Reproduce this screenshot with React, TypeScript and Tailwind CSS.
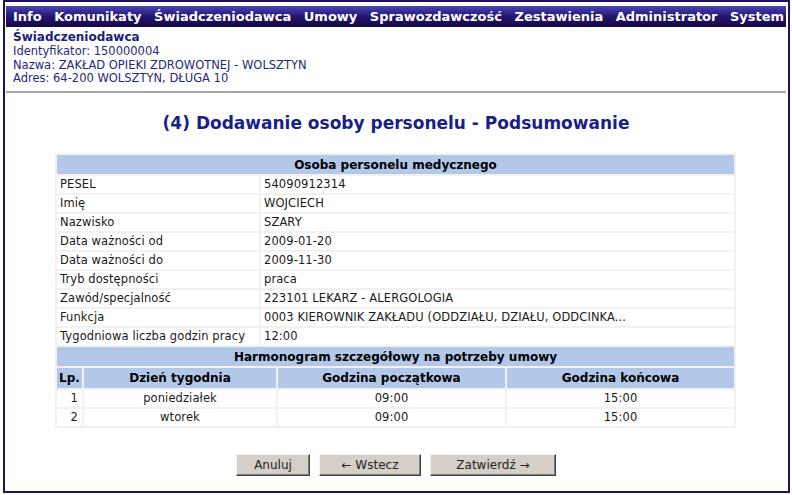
import React from "react";

const menu = ["Info", "Komunikaty", "Świadczeniodawca", "Umowy", "Sprawozdawczość", "Zestawienia", "Administrator", "System"];

const rows: [string, string][] = [
  ["PESEL", "54090912314"],
  ["Imię", "WOJCIECH"],
  ["Nazwisko", "SZARY"],
  ["Data ważności od", "2009-01-20"],
  ["Data ważności do", "2009-11-30"],
  ["Tryb dostępności", "praca"],
  ["Zawód/specjalność", "223101 LEKARZ - ALERGOLOGIA"],
  ["Funkcja", "0003 KIEROWNIK ZAKŁADU (ODDZIAŁU, DZIAŁU, ODDCINKA..."],
  ["Tygodniowa liczba godzin pracy", "12:00"],
];

const sched = [
  ["1", "poniedziałek", "09:00", "15:00"],
  ["2", "wtorek", "09:00", "15:00"],
];

const btn =
  "h-[22px] bg-[#d4d0c8] border border-t-[#f4f4f4] border-l-[#f4f4f4] border-b-[#404040] border-r-[#404040] shadow-[inset_-1px_-1px_0_#808080]";

export default function App() {
  return (
    <div className="w-[792px] h-[495px] bg-white overflow-hidden" style={{ fontFamily: '"DejaVu Sans", Verdana, sans-serif' }}>
      <div className="ml-[3px] w-[787px] h-[493px] border-2 border-[#1c1060] flex flex-col pt-[4px] pl-[1px] pr-[2px]">
        <div className="h-[21px] bg-gradient-to-b from-[#4a46b4] via-[#241670] to-[#150842] flex items-center pl-[7px] gap-[12.5px] text-white font-bold text-[13px]">
          {menu.map((m) => (
            <span key={m}>{m}</span>
          ))}
        </div>
        <div className="pl-[7px] pt-[3px] text-[#1f2a7c] leading-[13.5px]">
          <div className="font-bold text-[12px] text-[#17217a] leading-[15px]">Świadczeniodawca</div>
          <div className="text-[11.5px]">Identyfikator: 150000004</div>
          <div className="text-[11.5px]">Nazwa: ZAKŁAD OPIEKI ZDROWOTNEJ - WOLSZTYN</div>
          <div className="text-[11.5px]">Adres: 64-200 WOLSZTYN, DŁUGA 10</div>
        </div>
        <div className="mt-[5px] border-t-2 border-[#a4a4a4]" />
        <div className="mt-[18px] text-center font-bold text-[17px] text-[#1a1f86]">
          (4) Dodawanie osoby personelu - Podsumowanie
        </div>
        <div className="mt-[17px] ml-[49px] w-[681px] bg-[#f1f1f1] p-[2px] flex flex-col gap-[2px] text-[11.5px] tracking-[0.1px] text-[#1a1a1a]">
          <div className="h-[19px] bg-[#b3c8e8] flex items-center justify-center font-bold text-[12px] tracking-normal text-black">
            Osoba personelu medycznego
          </div>
          {rows.map(([k, v]) => (
            <div key={k} className="grid grid-cols-[202px_1fr] gap-[2px]">
              <div className="h-[17px] bg-white px-[3px] pt-[1px] flex items-center">{k}</div>
              <div className="h-[17px] bg-white px-[3px] pt-[1px] flex items-center">{v}</div>
            </div>
          ))}
          <div className="h-[19px] bg-[#b3c8e8] flex items-center justify-center font-bold text-[12px] tracking-normal text-black">
            Harmonogram szczegółowy na potrzeby umowy
          </div>
          <div className="grid grid-cols-[25px_192px_227px_1fr] gap-[2px] font-bold text-[12px] tracking-normal text-black">
            <div className="h-[20px] bg-[#b3c8e8] flex items-center justify-center">Lp.</div>
            <div className="h-[20px] bg-[#b3c8e8] flex items-center justify-center">Dzień tygodnia</div>
            <div className="h-[20px] bg-[#b3c8e8] flex items-center justify-center">Godzina początkowa</div>
            <div className="h-[20px] bg-[#b3c8e8] flex items-center justify-center">Godzina końcowa</div>
          </div>
          {sched.map((r) => (
            <div key={r[0]} className="grid grid-cols-[25px_192px_227px_1fr] gap-[2px]">
              <div className="h-[17px] bg-white px-[4px] pt-[1px] flex items-center justify-end">{r[0]}</div>
              <div className="h-[17px] bg-white pt-[1px] flex items-center justify-center">{r[1]}</div>
              <div className="h-[17px] bg-white pt-[1px] flex items-center justify-center">{r[2]}</div>
              <div className="h-[17px] bg-white pt-[1px] flex items-center justify-center">{r[3]}</div>
            </div>
          ))}
        </div>
        <div className="mt-[26px] flex justify-center gap-[9px] text-[12px] text-[#222]">
          <button className={`w-[74px] ${btn}`}>Anuluj</button>
          <button className={`w-[102px] ${btn}`}>← Wstecz</button>
          <button className={`w-[126px] ${btn}`}>Zatwierdź →</button>
        </div>
      </div>
    </div>
  );
}
